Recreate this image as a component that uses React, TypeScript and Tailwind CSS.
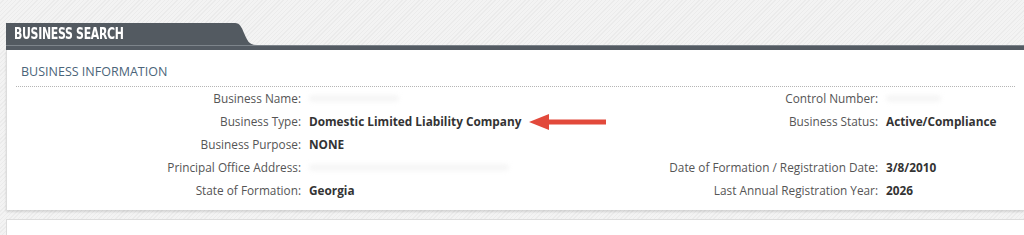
import React from "react";

const body = { fontFamily: '"Open Sans", "Liberation Sans", sans-serif' };

function Row({
  l1,
  v1,
  l2,
  v2,
}: {
  l1: string;
  v1: React.ReactNode;
  l2?: string;
  v2?: React.ReactNode;
}) {
  return (
    <>
      <div className="whitespace-nowrap text-right text-[#555]">{l1}</div>
      <div className="flex items-center whitespace-nowrap font-bold text-[#333]">{v1}</div>
      <div className="whitespace-nowrap text-right text-[#555]">{l2}</div>
      <div className="flex items-center whitespace-nowrap font-bold text-[#333]">{v2}</div>
    </>
  );
}

function Blurred({ w }: { w: string }) {
  return <span className={`inline-block h-[7px] rounded-full bg-[#f6f6f6] blur-[2px] ${w}`} />;
}

function Arrow() {
  return (
    <svg width="80" height="18" viewBox="0 0 80 18" className="ml-[8px] shrink-0">
      <path d="M0 9 L20 1 L20 6.5 L77 6.5 L77 11.5 L20 11.5 L20 17 Z" fill="#e2493b" />
    </svg>
  );
}

export default function App() {
  return (
    <div
      className="h-[235px] w-[1024px] overflow-hidden bg-[#f0f0f0] bg-[repeating-linear-gradient(135deg,#f3f3f3_0px,#f3f3f3_2px,#ebebeb_2px,#ebebeb_3px)] pl-[6px] pt-[23px]"
      style={body}
    >
      {/* tab header */}
      <div className="flex items-end">
        <div className="flex h-[22px] w-[226px] items-center bg-[#535a61] pl-2">
          <span
            className="origin-left scale-x-[0.76] whitespace-nowrap text-[16px] font-bold leading-none tracking-[-0.4px] text-white"
            style={{ fontFamily: '"Liberation Sans Narrow", "DejaVu Sans Condensed", sans-serif' }}
          >
            BUSINESS SEARCH
          </span>
        </div>
        <svg width="24" height="22" viewBox="0 0 24 22" className="block">
          <path d="M0 0 H3 C8 0 10 5 12 10 C15 17 17 22 24 22 H0 Z" fill="#535a61" />
        </svg>
      </div>
      <div className="h-[5px] border-t border-[#7d848b] bg-[#545b63]" />

      {/* info panel */}
      <div className="border-l border-[#dcdcdc] bg-white pb-[8px] shadow-[0_2px_2px_rgba(0,0,0,0.12)]">
        <div className="px-[14px] pt-[14px] pb-[6px] text-[12.5px] leading-[16px] text-[#4b6479]">
          BUSINESS INFORMATION
        </div>
        <div className="mx-[9px] border-t border-dotted border-[#b5b5b5]" />
        <div className="grid grid-cols-[294px_292px_269px_1fr] gap-x-2 text-[11.8px] leading-[23px] [&>div]:h-[23px]">
          <Row l1="Business Name:" v1={<Blurred w="w-[90px]" />} l2="Control Number:" v2={<Blurred w="w-[55px]" />} />
          <Row
            l1="Business Type:"
            v1={
              <>
                <span>Domestic Limited Liability Company</span>
                <Arrow />
              </>
            }
            l2="Business Status:"
            v2="Active/Compliance"
          />
          <Row l1="Business Purpose:" v1="NONE" />
          <Row
            l1="Principal Office Address:"
            v1={<Blurred w="w-[200px]" />}
            l2="Date of Formation / Registration Date:"
            v2="3/8/2010"
          />
          <Row l1="State of Formation:" v1="Georgia" l2="Last Annual Registration Year:" v2="2026" />
        </div>
      </div>

      <div className="mt-[9px] h-[40px] border-l border-t border-[#dcdcdc] bg-white" />
    </div>
  );
}
